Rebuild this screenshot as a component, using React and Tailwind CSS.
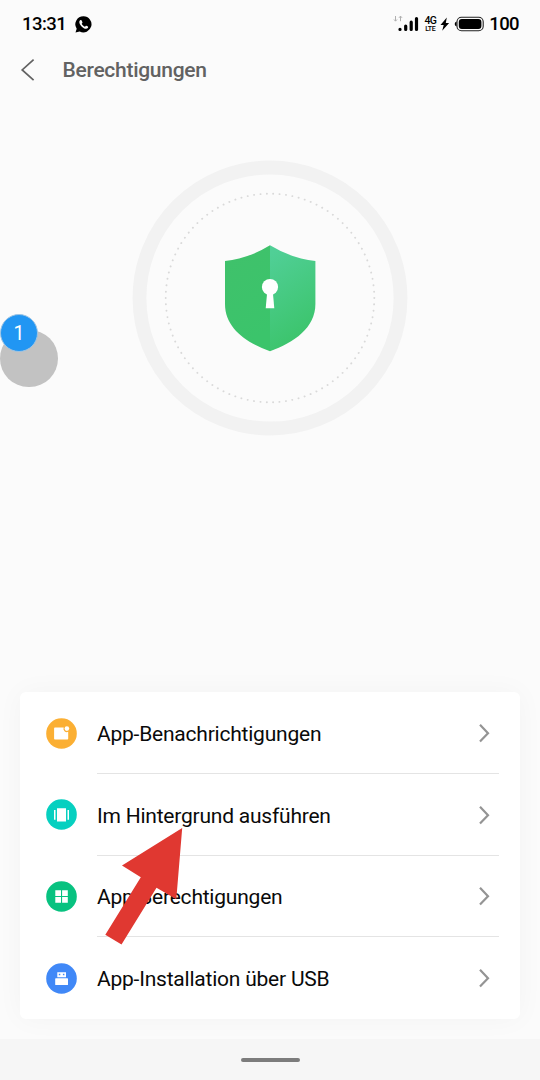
import React from "react";

function StatusBar() {
  return (
    <div className="flex h-12 items-center pl-[22px] pr-[21px] text-black">
      <span className="w-11 text-[18.5px] leading-6 font-medium tracking-[-0.55px]">13:31</span>
      <svg className="ml-[9px]" width="17" height="17" viewBox="0 0 17 17">
        <path d="M8.6.2A8.1 8.1 0 1 1 4.7 15.5L.5 16.5 1.7 12.8A8.1 8.1 0 0 1 8.6.2Z" fill="#000" />
        <path d="M5.4 4.1C4.2 4.8 4 6.4 4.8 8c.9 1.900 2.400 3.500 4.400 4.400 1.700.8 3.100.5 3.800-.7.300-.5.200-.9-.1-1.100l-1.500-.8c-.3-.1-.5-.1-.7.200l-.7.800c-1.500-.6-2.600-1.600-3.300-3l.6-.8c.2-.2.200-.4.100-.7l-.7-1.700c-.2-.5-.6-.7-1.300-.5Z" fill="#fbfbfb" />
      </svg>
      <div className="ml-auto flex items-center">
        <svg width="27" height="18" viewBox="393 15 27 18">
          <path d="M395.500 16v5M394 19.500l1.500 1.700 1.500-1.700M400.500 21.200v-5M399 17.800l1.500-1.700 1.500 1.700" fill="none" stroke="#b0b0b0" strokeWidth="1" />
          <path d="M400 29.300v.1M405.700 26v3.400M411.200 22.200v7.200M416.500 18.500v10.900" stroke="#000" strokeWidth="3.200" strokeLinecap="round" />
        </svg>
        <div className="ml-1 flex w-3 flex-col items-center pt-px font-medium">
          <span className="text-[10.5px] leading-[9px] tracking-[-0.9px]">4G</span>
          <span className="text-[7px] leading-[8px] font-medium tracking-[-0.3px]">LTE</span>
        </div>
        <svg className="ml-[4px]" width="11" height="18" viewBox="440 15 11 18">
          <path d="M446.800 17.600l-6.300 7.500h3.200l-1.500 5.700 6.900-7.700h-3.300z" fill="#000" />
        </svg>
        <svg className="ml-[3px]" width="30" height="16" viewBox="454 16 30 16">
          <rect x="457" y="17.300" width="26.200" height="13.400" rx="4.500" fill="#fbfbfb" stroke="#222" strokeWidth="1.100" />
          <rect x="458.800" y="19" width="22.600" height="10" rx="3" fill="#000" />
          <path d="M456.500 21.500q-1.800.8-1.800 2.500t1.800 2.500z" fill="#000" />
        </svg>
        <span className="ml-[5px] text-[18.500px] leading-6 font-medium tracking-[-0.6px]">100</span>
      </div>
    </div>
  );
}

function Header() {
  return (
    <header className="flex h-11 items-center pl-5 text-[#626262]">
      <svg width="15" height="24" viewBox="0 0 15 24" fill="none" stroke="currentColor" strokeWidth="1.700">
        <path d="M13.600 1.600 2.200 11.900 13.600 22.200" />
      </svg>
      <h1 className="ml-[27.500px] text-[21px] leading-6 font-medium tracking-[-0.28px]">Berechtigungen</h1>
    </header>
  );
}

function Shield() {
  return (
    <svg width="276" height="276" viewBox="132 160 276 276">
      <defs>
        <linearGradient id="left" x1="0" y1="0" x2="0.300" y2="1">
          <stop offset="0" stopColor="#40c16b" />
          <stop offset="1" stopColor="#3bc46b" />
        </linearGradient>
        <linearGradient id="right" x1="0.300" y1="0" x2="0.600" y2="1">
          <stop offset="0" stopColor="#50cf96" />
          <stop offset="1" stopColor="#3ac368" />
        </linearGradient>
      </defs>
      <circle cx="270" cy="298" r="130.500" fill="none" stroke="#f2f2f2" strokeWidth="13.800" />
      <circle cx="270" cy="298" r="104.300" fill="none" stroke="#d9d9d9" strokeWidth="1.900" strokeLinecap="round" pathLength="1020" strokeDasharray="0.100 9.900" />
      <path d="M270 245.300Q248.500 258.500 225 261V304C225 328 246 342.500 270 351.300Z" fill="url(#left)" />
      <path d="M270 245.300Q291.500 258.500 315.400 261V304C315.400 328 294 342.500 270 351.300Z" fill="url(#right)" />
      <circle cx="270" cy="287" r="8.100" fill="#fff" />
      <path d="M267.200 292h5.600l1.500 16.300h-8.600z" fill="#fff" />
    </svg>
  );
}

function FloatingBubble() {
  return (
    <div className="absolute top-[314px] left-0 h-[74px] w-[58px]">
      <div className="absolute bottom-px left-0 size-[57.500px] rounded-full bg-[#c2c2c2]" />
      <div className="absolute top-0 left-0 flex size-[38px] items-center justify-center rounded-full border border-[#9dc4e4] bg-[#2196f3] pt-0.5 text-[19.500px] text-white">
        1
      </div>
    </div>
  );
}

const items = [
  {
    label: "App-Benachrichtigungen",
    color: "#fbaf33",
    glyph: (
      <>
        <path d="M8.900 9.600h8.800a3.300 3.300 0 0 0 4.500 4.200v6.900a.8.800 0 0 1-.8.800H8.900a.8.800 0 0 1-.8-.8V10.400a.8.800 0 0 1 .8-.8Z" />
        <circle cx="20.900" cy="10.600" r="2.300" />
      </>
    ),
  },
  {
    label: "Im Hintergrund ausführen",
    color: "#06d0c0",
    glyph: <path d="M11 9.200h9v13.200h-9zM8 11h1.500v9.700H8zM21.500 11H23v9.700h-1.500z" />,
  },
  {
    label: "App-Berechtigungen",
    color: "#08c280",
    glyph: <path d="M9.300 9.300h5.700v5.600H9.300zM16.100 9.300h5.700v5.600h-5.700zM9.300 16.100h5.700v5.600H9.300zM16.100 16.100h5.700v5.600h-5.700z" />,
  },
  {
    label: "App-Installation über USB",
    color: "#4088f7",
    glyph: (
      <path
        fillRule="evenodd"
        d="M11.300 9.300h8.700v5h-8.700zM12.800 10.800v1.500h1.500v-1.500zM16.900 10.800v1.500h1.500v-1.500zM9.800 15.300h11.600a.6.600 0 0 1 .6.600v5.600a.6.600 0 0 1-.6.600H9.800a.6.600 0 0 1-.6-.6v-5.600a.6.600 0 0 1 .6-.6Z"
      />
    ),
  },
];

function Row({ item, last }) {
  return (
    <li className="flex flex-1 items-stretch pr-[21px] pl-[26px]">
      <svg className="mt-[25.500px] shrink-0" width="31" height="31" viewBox="0 0 31 31" fill="#fff">
        <circle cx="15.500" cy="15.500" r="15.300" fill={item.color} />
        {item.glyph}
      </svg>
      <div className={`ml-5 flex flex-1 items-center justify-between ${last ? "pb-px" : "border-b border-[#e4e4e4]"}`}>
        <span className="pt-[3px] text-[21px] leading-6 tracking-[-0.22px] text-[#0a0a0a]">{item.label}</span>
        <svg className="mt-px mr-[8px]" width="13" height="20" viewBox="0 0 13 20" fill="none" stroke="#949494" strokeWidth="2.200">
          <path d="M2 1.800 10 10.200 2 18.600" />
        </svg>
      </div>
    </li>
  );
}

export default function App() {
  return (
    <div className="relative flex h-[1080px] w-[540px] flex-col overflow-hidden bg-[#fbfbfb] font-['Roboto',sans-serif]">
      <StatusBar />
      <Header />
      <main className="flex flex-1 flex-col items-center pt-[68px]">
        <Shield />
        <ul className="mt-auto mb-5 flex h-[327px] w-[500px] flex-col rounded-md bg-white shadow-[0_0_28px_rgba(0,0,0,0.035)]">
          {items.map((item, i) => (
            <Row key={item.label} item={item} last={i === items.length - 1} />
          ))}
        </ul>
      </main>
      <footer className="z-10 flex h-[41px] items-center justify-center bg-[#f6f6f6]">
        <div className="h-1 w-[59px] rounded-full bg-[#7c7c7c]" />
      </footer>
      <FloatingBubble />
      <svg className="absolute top-[827px] left-[104px]" width="80" height="119" viewBox="104 827 80 119">
        <path d="M182.200 828 122 865.500 140.800 877.200 105.300 934.700 121.500 944.500 156.500 887.700 176.300 899.200Z" fill="#e03831" />
      </svg>
    </div>
  );
}
